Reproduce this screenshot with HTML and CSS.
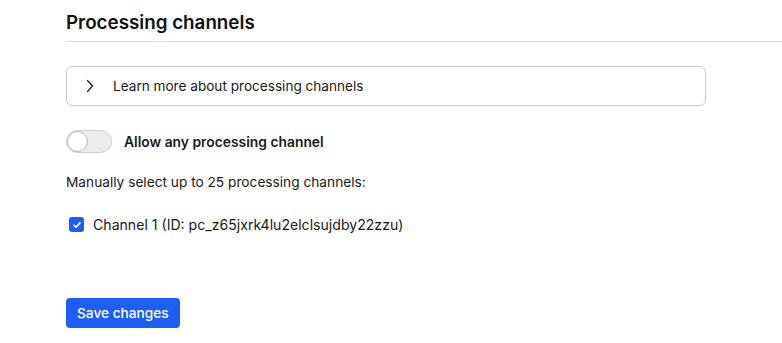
FILE: index.html
```html
<!DOCTYPE html>
<html lang="en">
<head>
    <meta charset="UTF-8">
    <meta name="viewport" content="width=device-width, initial-scale=1.0">
    <title>Processing channels</title>
    <link rel="stylesheet" href="styles.css">
</head>
<body>
    <div class="page">
        <h2 class="section-title">Processing channels</h2>

        <div class="content">
            <!-- Info accordion -->
            <div class="accordion">
                <svg class="chevron" width="8" height="14" viewBox="0 0 8 14">
                    <path d="M1.5 1.5 L6.5 7 L1.5 12.5" fill="none" stroke="#222" stroke-width="1.2" stroke-linecap="round" stroke-linejoin="round"/>
                </svg>
                <span>Learn more about processing channels</span>
            </div>

            <!-- Allow any toggle -->
            <label class="toggle-row">
                <span class="toggle"><span class="knob"></span></span>
                <span class="toggle-label">Allow any processing channel</span>
            </label>

            <p class="hint">Manually select up to 25 processing channels:</p>

            <label class="check-row">
                <span class="checkbox">
                    <svg width="10" height="10" viewBox="0 0 10 10">
                        <path d="M2 5.2 L4.1 7.2 L8 2.9" fill="none" stroke="#fff" stroke-width="1.6" stroke-linecap="round" stroke-linejoin="round"/>
                    </svg>
                </span>
                <span>Channel 1 (ID: pc_z65jxrk4lu2elclsujdby22zzu)</span>
            </label>

            <button class="save-btn">Save changes</button>
        </div>
    </div>
</body>
</html>
```

FILE: styles.css
```css
:root {
    --primary-color: #1f5ef5;
    --border-color: #c9c9c9;
    --text-color: #1a1a1a;
}

* {
    margin: 0;
    padding: 0;
    box-sizing: border-box;
}

body {
    font-family: Inter, 'Noto Sans', sans-serif;
    color: var(--text-color);
    background: #fff;
    font-size: 14px;
}

.page {
    padding-left: 66px;
    padding-top: 11px;
}

.section-title {
    font-size: 18.8px;
    font-weight: 600;
    line-height: 23px;
    color: #111;
    padding-bottom: 7px;
    border-bottom: 1px solid #dcdcdc;
}

.content {
    width: 640px;
}

/* Accordion */
.accordion {
    margin-top: 24px;
    height: 40px;
    border: 1px solid var(--border-color);
    border-radius: 6px;
    display: flex;
    align-items: center;
    gap: 19px;
    padding-left: 19px;
    font-size: 13.6px;
}

.chevron {
    flex-shrink: 0;
}

/* Toggle */
.toggle-row {
    display: flex;
    align-items: center;
    gap: 12px;
    margin-top: 24px;
}

.toggle {
    width: 46px;
    height: 23px;
    border-radius: 12px;
    background: #ececec;
    border: 1px solid #cfcfcf;
    position: relative;
}

.knob {
    position: absolute;
    left: 0;
    top: 0;
    width: 21px;
    height: 21px;
    border-radius: 50%;
    background: #fff;
    border: 1px solid #b5b5b5;
}

.toggle-label {
    font-weight: 600;
    font-size: 13.85px;
}

.hint {
    margin-top: 20px;
    font-size: 13.7px;
    line-height: 18px;
}

/* Checkbox */
.check-row {
    display: flex;
    align-items: center;
    gap: 9px;
    margin-top: 25px;
    margin-left: 3px;
    font-size: 14.1px;
}

.checkbox {
    width: 15px;
    height: 15px;
    border-radius: 3px;
    background: var(--primary-color);
    display: flex;
    align-items: center;
    justify-content: center;
}

.save-btn {
    margin-top: 65px;
    background: var(--primary-color);
    color: #fff;
    border: none;
    border-radius: 4px;
    height: 30px;
    padding: 0 11px;
    font-family: inherit;
    font-size: 13.7px;
    font-weight: 500;
}
```
